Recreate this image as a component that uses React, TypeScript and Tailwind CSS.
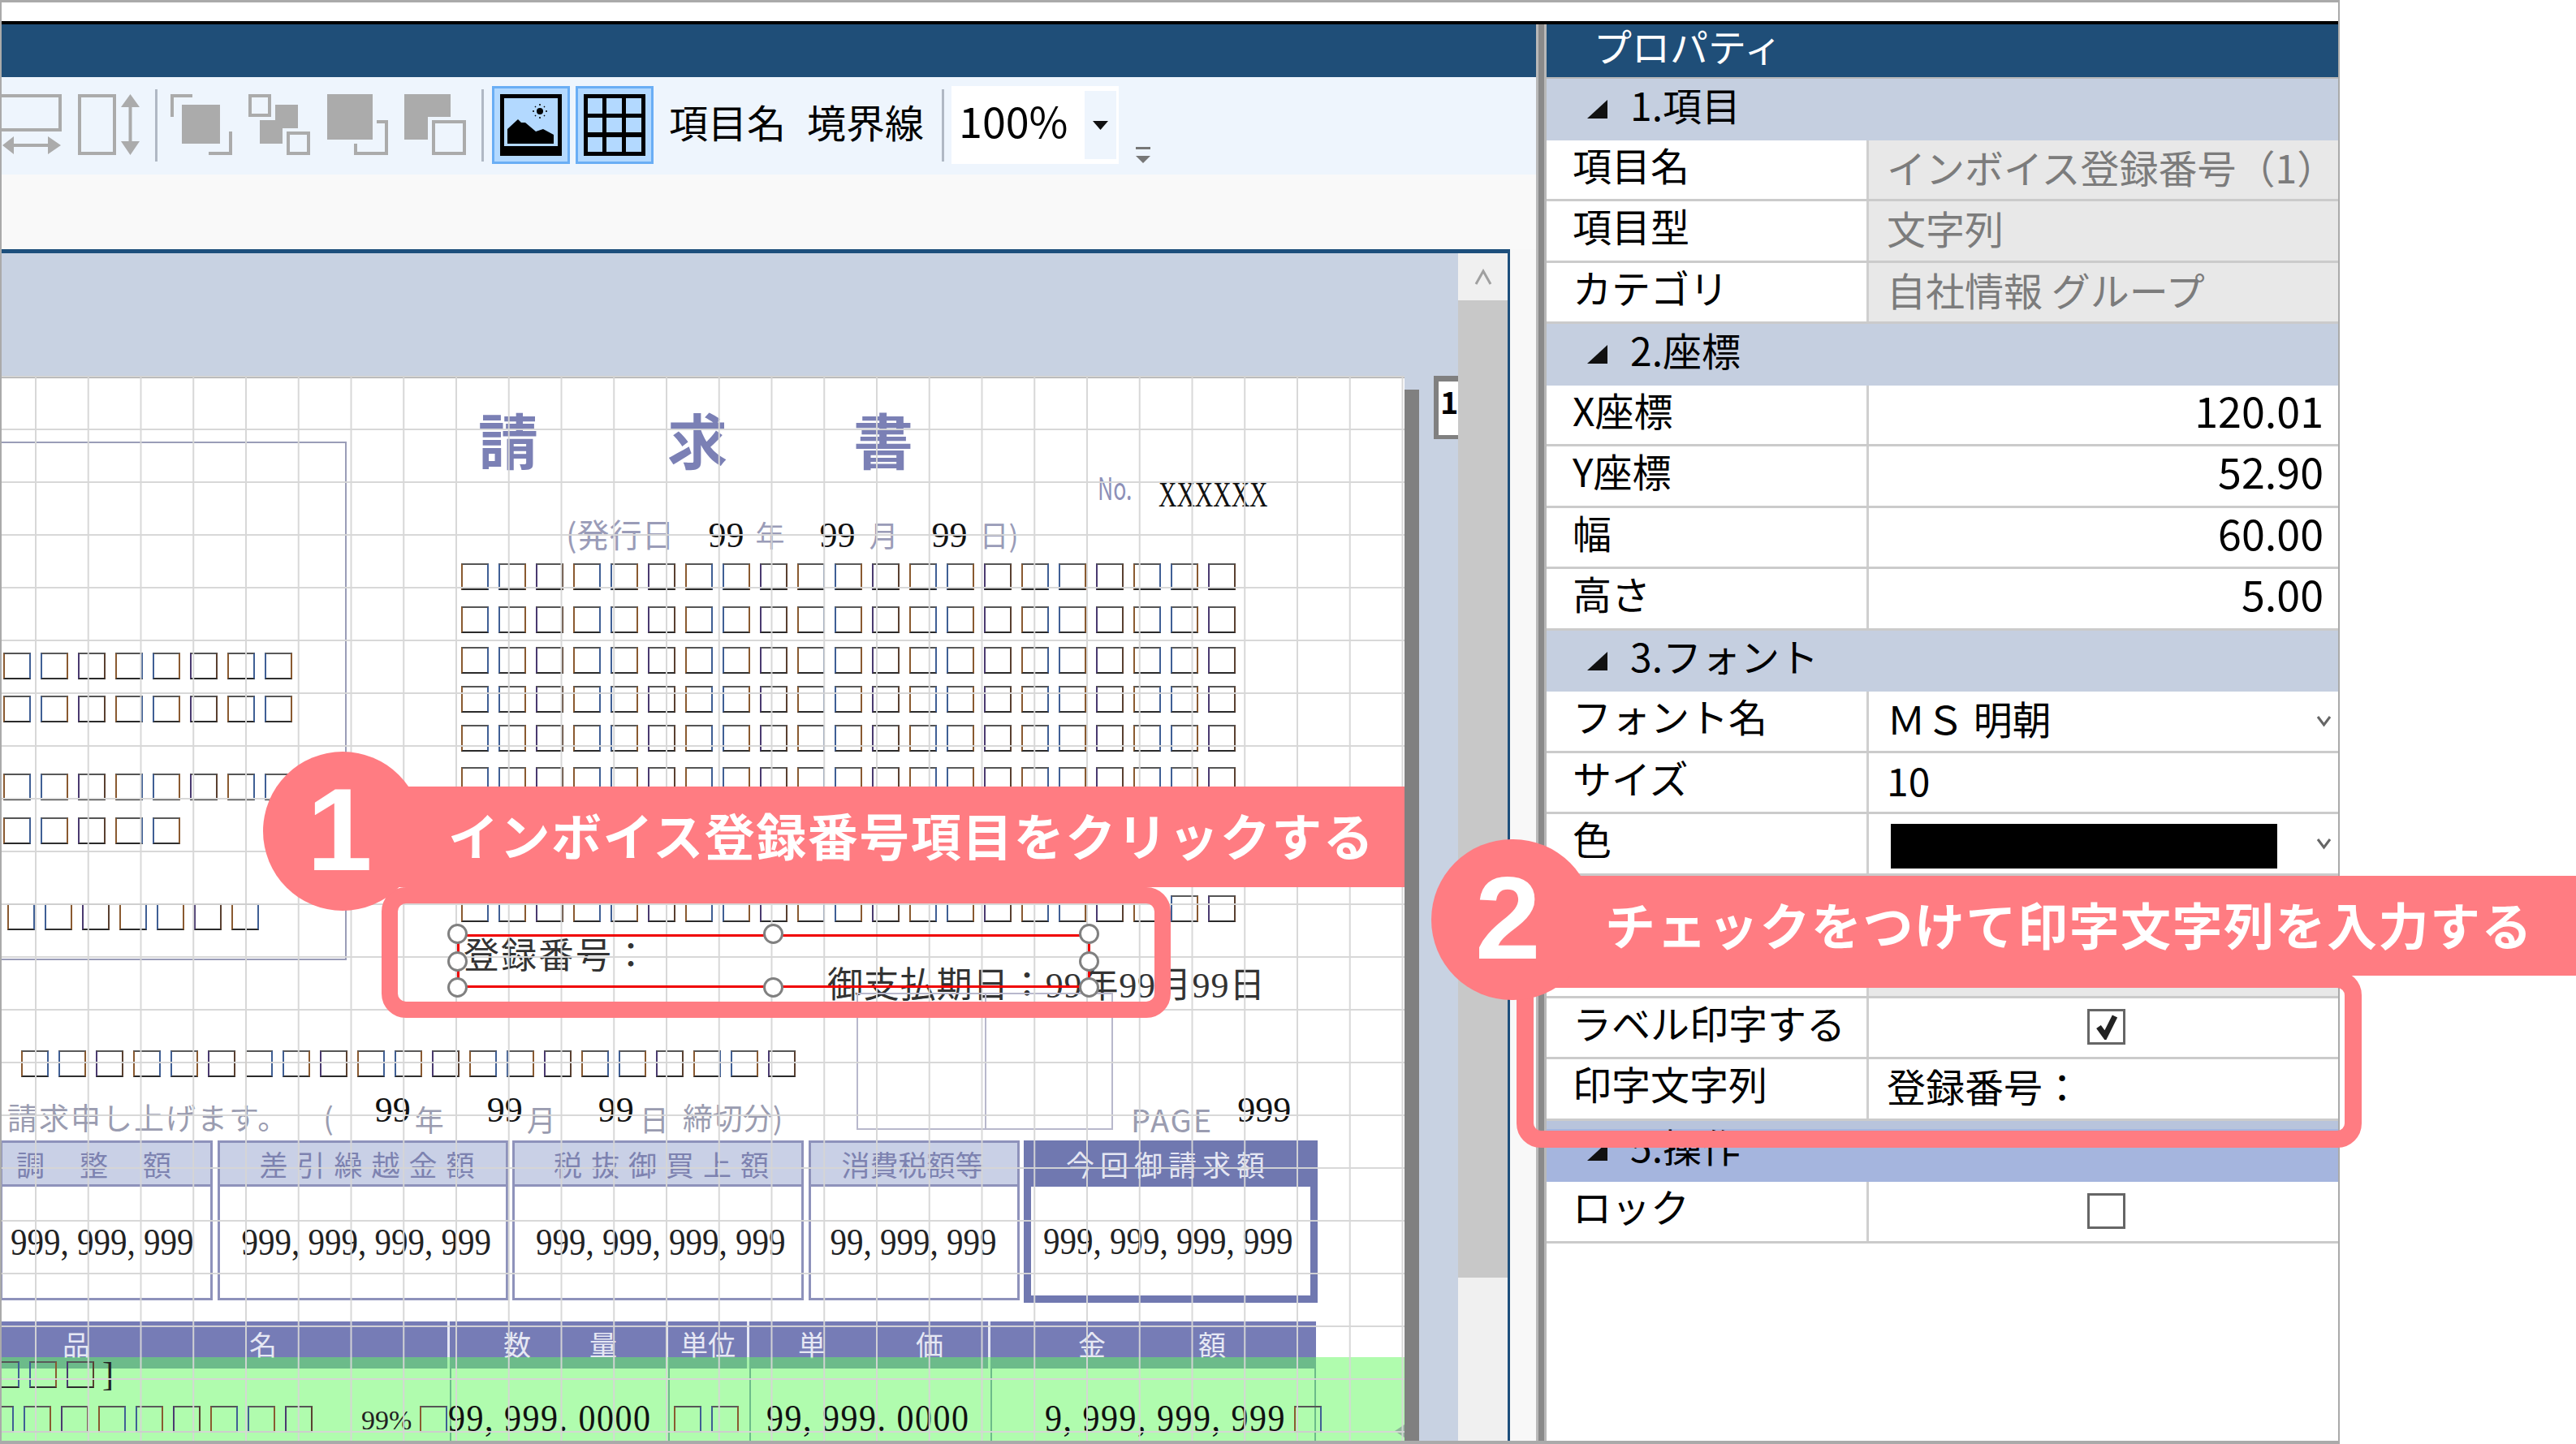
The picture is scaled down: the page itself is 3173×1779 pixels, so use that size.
const gothic = "font-['Noto_Sans_CJK_JP','Liberation_Sans',sans-serif]";
const mincho = "font-['Liberation_Serif','Noto_Sans_CJK_JP',serif]";

const fringes = [
  'border-t-[#555] border-b-[#2a2a2a] border-l-[#8a5a30] border-r-[#3f5f95]',
  'border-t-[#5a5a5a] border-b-[#303030] border-l-[#3f5f95] border-r-[#8a5a30]',
  'border-t-[#555] border-b-[#2a2a2a] border-l-[#4a3a70] border-r-[#5a4030]',
];

function Squares({ count, className = '' }: { count: number; className?: string }) {
  return (
    <div className={`flex gap-[12px] ${className}`}>
      {Array.from({ length: count }, (_, i) => (
        <div key={i} className={`h-[33px] w-[34px] shrink-0 border-2 ${fringes[i % 3]}`} />
      ))}
    </div>
  );
}

function SummaryBox({ title, value, className, titleClass, valueClass, strong }: {
  title: string;
  value: string;
  className: string;
  titleClass: string;
  valueClass: string;
  strong?: boolean;
}) {
  return (
    <div className={`flex shrink-0 flex-col bg-white ${strong ? 'border-[9px] border-t-0 border-[#7078b0]' : 'border-[3px] border-[#8e92bb]'} ${className}`}>
      <div className={`flex h-[54px] shrink-0 items-center whitespace-nowrap text-[35px] leading-none ${strong ? 'bg-[#7078b0] text-[#e4e6f3]' : 'border-b-[3px] border-[#8e92bb] bg-[#c9d0e6] text-[#7d82b0]'} ${titleClass}`}>
        {title}
      </div>
      <div className={`flex flex-1 items-center whitespace-nowrap text-[41px] leading-none text-[#222] ${mincho} ${valueClass}`}>
        <span className="inline-block scale-y-[1.12]">{value}</span>
      </div>
    </div>
  );
}

function InvoiceForm() {
  const digit = `text-[44px] leading-none text-[#111] ${mincho}`;
  return (
    <div className={`relative h-[1312px] w-[1728px] shrink-0 overflow-hidden bg-white ${gothic}`}>
      <div className="absolute left-0 right-0 top-0 h-[3px] bg-[#a8a8a8]" />

      {/* left address frame */}
      <div className="absolute left-[-2px] top-[81px] h-[639px] w-[427px] border-2 border-[#9a9db8]" />

      <div className="absolute left-[587px] top-[40px] flex text-[74px] font-bold leading-none text-[#7b80b5]">
        <span>請</span>
        <span className="ml-[159px]">求</span>
        <span className="ml-[155px]">書</span>
      </div>

      <span className="absolute left-[1350px] top-[118px] origin-left scale-x-[0.7] text-[38px] leading-none text-[#8d90b8]">No.</span>
      <span className={`absolute left-[1425px] top-[124px] origin-left scale-x-[0.69] text-[45px] leading-none text-[#111] ${mincho}`}>XXXXXX</span>

      <div className="absolute left-[695px] top-[174px] flex items-baseline whitespace-nowrap text-[36px] leading-none text-[#9a9cb8]">
        <span className="text-[40px]">(発行日</span>
        <span className={`ml-[42px] ${digit}`}>99</span>
        <span className="ml-[14px]">年</span>
        <span className={`ml-[43px] ${digit}`}>99</span>
        <span className="ml-[17px]">月</span>
        <span className={`ml-[41px] ${digit}`}>99</span>
        <span className="ml-[15px]">日)</span>
      </div>

      {/* customer and address character cells */}
      <div className="absolute left-[566px] top-[231px] flex flex-col">
        <Squares count={21} />
        <Squares count={21} className="mt-[20px]" />
        <Squares count={21} className="mt-[17px]" />
        <Squares count={21} className="mt-[15px]" />
        <Squares count={21} className="mt-[15px]" />
        <Squares count={21} className="mt-[19px]" />
        <Squares count={21} className="mt-[125px]" />
      </div>
      <div className="absolute left-[2px] top-[341px] flex flex-col">
        <Squares count={8} />
        <Squares count={8} className="mt-[20px]" />
        <Squares count={8} className="mt-[63px]" />
        <Squares count={5} className="mt-[21px]" />
        <Squares count={7} className="ml-[5px] mt-[73px]" />
      </div>
      <Squares count={21} className="absolute left-[24px] top-[831px]" />

      <span className="absolute left-[569px] top-[689px] whitespace-nowrap text-[44px] leading-none tracking-[2px] text-[#333]">登録番号：</span>
      <span className={`absolute left-[1017px] top-[730px] whitespace-nowrap text-[44px] leading-none tracking-[0.8px] text-[#333] ${mincho}`}>御支払期日：99年99月99日</span>

      {/* stamp frame */}
      <div className="absolute left-[1053px] top-[760px] h-[169px] w-[316px] border-2 border-[#b8b8cc]">
        <div className="ml-[156px] h-full w-[2px] bg-[#b8b8cc]" />
      </div>

      <div className="absolute left-[7px] top-[883px] flex items-start whitespace-nowrap text-[37px] leading-none text-[#9a9cb0]">
        <span className="mt-[12px] tracking-[2px]">請求申し上げます。</span>
        <span className="ml-[42px] mt-[12px]">(</span>
        <span className={`ml-[51px] ${digit}`}>99</span>
        <span className="ml-[5px] mt-[14px] text-[36px]">年</span>
        <span className={`ml-[53px] ${digit}`}>99</span>
        <span className="ml-[5px] mt-[14px] text-[36px]">月</span>
        <span className={`ml-[52px] ${digit}`}>99</span>
        <span className="ml-[7px] mt-[14px] text-[36px]">日</span>
        <span className="ml-[17px] mt-[12px]">締切分)</span>
      </div>
      <div className="absolute left-[1391px] top-[883px] flex items-start whitespace-nowrap leading-none">
        <span className="mt-[14px] text-[38px] tracking-[2px] text-[#9a9cb0]">PAGE</span>
        <span className={`ml-[30px] ${digit}`}>999</span>
      </div>

      {/* totals */}
      <div className="absolute left-[-2px] top-[942px] flex items-start gap-[5.5px]">
        <SummaryBox title="調整額" value="999, 999, 999" className="h-[197px] w-[262px]" titleClass="pl-[17px] tracking-[43px]" valueClass="pl-[10px]" />
        <SummaryBox title="差引繰越金額" value="999, 999, 999, 999" className="h-[197px] w-[358px]" titleClass="pl-[49px] tracking-[11px]" valueClass="pl-[27px]" />
        <SummaryBox title="税抜御買上額" value="999, 999, 999, 999" className="h-[197px] w-[359px]" titleClass="pl-[48px] tracking-[11px]" valueClass="pl-[26px]" />
        <SummaryBox title="消費税額等" value="99, 999, 999" className="h-[197px] w-[260px]" titleClass="pl-[38px]" valueClass="pl-[24px]" />
        <SummaryBox strong title="今回御請求額" value="999, 999, 999, 999" className="h-[200px] w-[362px]" titleClass="h-[57px] pl-[43px] tracking-[7px]" valueClass="pl-[15px]" />
      </div>

      {/* detail table */}
      <div className="absolute left-0 top-[1165px] flex h-[147px] w-[1619px] border-r-2 border-[#767cb6] text-[34px] leading-none text-[#e6e8f4]">
        <div className="w-[554px] shrink-0 border-r-2 border-[#767cb6]">
          <div className="flex h-[58px] gap-[196px] border-r-[3px] border-[#e6e8f4] bg-[#767cb6] pl-[75px] pt-[11px]"><span>品</span><span>名</span></div>
        </div>
        <div className="w-[269px] shrink-0 border-r-2 border-[#767cb6]">
          <div className="flex h-[58px] gap-[72px] border-r-[3px] border-[#e6e8f4] bg-[#767cb6] pl-[64px] pt-[11px]"><span>数</span><span>量</span></div>
        </div>
        <div className="w-[100px] shrink-0 border-r-2 border-[#767cb6]">
          <div className="flex h-[58px] whitespace-nowrap border-r-[3px] border-[#e6e8f4] bg-[#767cb6] pl-[13px] pt-[11px]">単位</div>
        </div>
        <div className="w-[297px] shrink-0 border-r-2 border-[#767cb6]">
          <div className="flex h-[58px] gap-[111px] border-r-[3px] border-[#e6e8f4] bg-[#767cb6] pl-[58px] pt-[11px]"><span>単</span><span>価</span></div>
        </div>
        <div className="min-w-0 flex-1">
          <div className="flex h-[58px] gap-[114px] bg-[#767cb6] pl-[106px] pt-[11px]"><span>金</span><span>額</span></div>
        </div>
      </div>

      {/* selected detail band */}
      <div className="absolute bottom-0 left-0 right-0 h-[103px] bg-[#61f95e80]" />

      <Squares count={3} className="absolute left-[-12px] top-[1214px]" />
      <span className={`absolute left-[124px] top-[1209px] text-[42px] leading-none text-[#222] ${mincho}`}>]</span>
      <Squares count={9} className="absolute left-[-19px] top-[1269px]" />
      <span className={`absolute left-[443px] top-[1270px] text-[34px] leading-none text-[#222] ${mincho}`}>99%</span>
      <Squares count={1} className="absolute left-[515px] top-[1269px]" />
      <span className={`absolute left-[550px] top-[1264px] scale-y-[1.1] whitespace-nowrap text-[42px] leading-none tracking-[1.5px] text-[#111] ${mincho}`}>99, 999. 0000</span>
      <Squares count={2} className="absolute left-[828px] top-[1269px]" />
      <span className={`absolute left-[942px] top-[1264px] scale-y-[1.1] whitespace-nowrap text-[42px] leading-none tracking-[1.5px] text-[#111] ${mincho}`}>99, 999. 0000</span>
      <span className={`absolute left-[1285px] top-[1264px] scale-y-[1.1] whitespace-nowrap text-[42px] leading-none tracking-[1.5px] text-[#111] ${mincho}`}>9, 999, 999, 999</span>
      <Squares count={1} className="absolute left-[1592px] top-[1269px]" />
      <svg className="absolute left-[1716px] top-[1292px]" width="12" height="16" viewBox="0 0 12 16"><path d="M12 0V16L0 8Z" fill="#8fb59a" /></svg>

      {/* design grid */}
      <div className="pointer-events-none absolute inset-0 bg-[linear-gradient(to_right,#d6d6d6_2px,transparent_2px),linear-gradient(to_bottom,#d6d6d6_2px,transparent_2px)] bg-size-[64.75px_65px] bg-position-[41px_65px] opacity-95" />

      {/* selection rectangle with its handles */}
      <div className="absolute left-[561px] top-[688px] h-[66px] w-[780px] border-[3.5px] border-[#f00000]" />
      <div className="absolute left-[549px] top-[675px] size-[25px] rounded-full border-[3px] border-[#808080] bg-white" />
      <div className="absolute left-[938px] top-[675px] size-[25px] rounded-full border-[3px] border-[#808080] bg-white" />
      <div className="absolute left-[1327px] top-[675px] size-[25px] rounded-full border-[3px] border-[#808080] bg-white" />
      <div className="absolute left-[549px] top-[709px] size-[25px] rounded-full border-[3px] border-[#808080] bg-white" />
      <div className="absolute left-[1327px] top-[709px] size-[25px] rounded-full border-[3px] border-[#808080] bg-white" />
      <div className="absolute left-[549px] top-[741px] size-[25px] rounded-full border-[3px] border-[#808080] bg-white" />
      <div className="absolute left-[938px] top-[741px] size-[25px] rounded-full border-[3px] border-[#808080] bg-white" />
      <div className="absolute left-[1327px] top-[741px] size-[25px] rounded-full border-[3px] border-[#808080] bg-white" />
    </div>
  );
}

function Toolbar() {
  const gray = '#ababab';
  return (
    <div className="flex h-[120px] shrink-0 items-center bg-[#eef5fd] pb-[2px]">
      <svg className="shrink-0" width="74" height="76" viewBox="0 0 74 76" fill="none">
        <path d="M-3 2H72V44H-3" stroke={gray} strokeWidth="4" />
        <path d="M5 63H68" stroke={gray} strokeWidth="4" />
        <path d="M1 63L15 52V74ZM73 63L57 52V74Z" fill={gray} />
      </svg>
      <svg className="ml-[20px] shrink-0" width="76" height="76" viewBox="0 0 76 76" fill="none">
        <rect x="2" y="2" width="43" height="71" stroke={gray} strokeWidth="4" />
        <path d="M64.5 10V66" stroke={gray} strokeWidth="4" />
        <path d="M53 16H76L64.5 0ZM53 58H76L64.5 75Z" fill={gray} />
      </svg>
      <div className="ml-[19px] h-[89px] w-[3px] shrink-0 bg-[#b0b8c4]" />
      <svg className="ml-[16px] shrink-0" width="76" height="76" viewBox="0 0 76 76" fill="none">
        <path d="M2 28V2H27" stroke={gray} strokeWidth="4" />
        <rect x="14" y="13" width="47" height="48" fill={gray} />
        <path d="M74 46V73H47" stroke={gray} strokeWidth="4" />
      </svg>
      <svg className="ml-[20px] shrink-0" width="76" height="76" viewBox="0 0 76 76" fill="none">
        <rect x="2" y="2" width="24" height="24" stroke={gray} strokeWidth="4" />
        <rect x="33" y="13" width="28" height="29" fill={gray} />
        <rect x="14" y="32" width="28" height="29" fill={gray} />
        <rect x="49" y="48" width="25" height="25" stroke={gray} strokeWidth="4" />
      </svg>
      <svg className="ml-[21px] shrink-0" width="75" height="76" viewBox="0 0 75 76" fill="none">
        <rect width="56" height="56" fill={gray} />
        <path d="M61 34H73V73H35V61" stroke={gray} strokeWidth="4" />
      </svg>
      <svg className="ml-[20px] shrink-0" width="76" height="76" viewBox="0 0 76 76" fill="none">
        <path d="M0 0H57V28H29V56H0Z" fill={gray} />
        <rect x="36" y="34" width="38" height="39" stroke={gray} strokeWidth="4" />
      </svg>
      <div className="ml-[19px] h-[89px] w-[3px] shrink-0 bg-[#b0b8c4]" />
      <button className="ml-[10px] flex size-[96px] shrink-0 items-center justify-center border-[3px] border-[#6aaef5] bg-[#b3d9ff]">
        <svg width="76" height="76" viewBox="0 0 76 76">
          <rect width="76" height="76" fill="#000" />
          <rect x="5" y="5" width="66" height="59" fill="#b3d9ff" />
          <path d="M9 43L22 31L26 35L31 35L44 46L53 43L66 50V61H9Z" fill="#000" />
          <circle cx="49" cy="21" r="4" fill="#000" />
          <path d="M49 12V14M49 28V30M40 21H42M56 21H58M43 15L44 16M54 26L55 27M43 27L44 26M54 16L55 15" stroke="#000" strokeWidth="1.5" />
        </svg>
      </button>
      <button className="ml-[7px] flex size-[96px] shrink-0 items-center justify-center border-[3px] border-[#6aaef5] bg-[#b3d9ff]">
        <svg width="76" height="76" viewBox="0 0 76 76">
          <rect width="76" height="76" fill="#000" />
          <path d="M5 5H23V24H5ZM28 5H47V24H28ZM52 5H71V24H52ZM5 29H23V47H5ZM28 29H47V47H28ZM52 29H71V47H52ZM5 53H23V71H5ZM28 53H47V71H28ZM52 53H71V71H52Z" fill="#b3d9ff" />
        </svg>
      </button>
      <span className="mb-[10px] ml-[19px] shrink-0 whitespace-nowrap text-[48px] leading-none text-black">項目名</span>
      <span className="mb-[10px] ml-[26px] shrink-0 whitespace-nowrap text-[48px] leading-none text-black">境界線</span>
      <div className="ml-[22px] h-[89px] w-[3px] shrink-0 bg-[#b0b8c4]" />
      <div className="ml-[9px] flex h-[96px] w-[206px] shrink-0 items-center justify-between bg-white pl-[9px] pr-[3px]">
        <span className="mb-[13px] text-[52px] leading-none text-black">100%</span>
        <div className="flex h-[84px] w-[39px] items-center justify-center bg-[#eef5fd]">
          <svg width="19" height="11" viewBox="0 0 19 11"><path d="M0 0H19L9.5 11Z" fill="#111" /></svg>
        </div>
      </div>
      <div className="mb-[12px] ml-[21px] flex shrink-0 flex-col gap-[8px] self-end">
        <div className="h-[3px] w-[18px] bg-[#777]" />
        <svg width="18" height="9" viewBox="0 0 18 9"><path d="M0 0H18L9 9Z" fill="#777" /></svg>
      </div>
    </div>
  );
}

function Section({ title, active }: { title?: string; active?: boolean }) {
  return (
    <div className={`flex h-[75.5px] shrink-0 items-center pl-[50px] ${active ? 'border-t-[10px] border-[#b8c4dc] bg-[#a5b5de] pb-[24px]' : 'bg-[#c5cfe0] pb-[14px]'}`}>
      <svg width="25" height="23" viewBox="0 0 25 23" className="mt-[14px]"><path d="M25 0V23H0Z" fill="#111" /></svg>
      <span className="ml-[28px] text-[48px] leading-none text-black">{title}</span>
    </div>
  );
}

function Chevron() {
  return (
    <svg className="absolute right-[8px] top-[29px]" width="19" height="15" viewBox="0 0 19 15" fill="none">
      <path d="M2 2L9.5 12L17 2" stroke="#666" strokeWidth="3" />
    </svg>
  );
}

function Row({ label, children, disabled, right }: {
  label?: string;
  children?: React.ReactNode;
  disabled?: boolean;
  right?: boolean;
}) {
  return (
    <div className="flex h-[75.5px] shrink-0 border-b-[3px] border-[#cbcbcb] bg-white">
      <div className="w-[394px] shrink-0 whitespace-nowrap pl-[32px] pt-[5px] text-[48px] leading-none text-black">{label}</div>
      <div className={`relative flex flex-1 items-center border-l-[3px] border-[#cfcfcf] pb-[8px] text-[48px] leading-none ${disabled ? 'bg-[#e8e8e8] text-[#7c7c7c]' : 'text-black'} ${right ? 'justify-end pr-[18px]' : 'pl-[22px]'}`}>
        {children}
      </div>
    </div>
  );
}

function Checkbox({ checked, className }: { checked?: boolean; className: string }) {
  return (
    <div className={`ml-[247px] flex h-[44px] w-[47px] items-center justify-center border-[3px] border-[#666] bg-white ${className}`}>
      {checked && (
        <svg width="30" height="32" viewBox="0 0 30 32" fill="none">
          <path d="M5 16L13 27L25 3" stroke="#222" strokeWidth="7" />
        </svg>
      )}
    </div>
  );
}

function PropertyPanel() {
  return (
    <div className="flex min-w-0 flex-1 flex-col bg-white">
      <div className="flex h-[65px] shrink-0 items-center bg-[#1f4e78] pb-[14px] pl-[58px] text-[47px] leading-none text-white">プロパティ</div>
      <div className="h-[2px] shrink-0 bg-[#b8b8b8]" />
      <Section title="1.項目" />
      <Row label="項目名" disabled>インボイス登録番号（1）</Row>
      <Row label="項目型" disabled>文字列</Row>
      <Row label="カテゴリ" disabled>自社情報 グループ</Row>
      <Section title="2.座標" />
      <Row label="X座標" right><span className="mb-[4px] text-[52px]">120.01</span></Row>
      <Row label="Y座標" right><span className="mb-[4px] text-[52px]">52.90</span></Row>
      <Row label="幅" right><span className="mb-[4px] text-[52px]">60.00</span></Row>
      <Row label="高さ" right><span className="mb-[4px] text-[52px]">5.00</span></Row>
      <Section title="3.フォント" />
      <Row label="フォント名">ＭＳ 明朝<Chevron /></Row>
      <Row label="サイズ">10</Row>
      <Row label="色">
        <div className="ml-[5px] mt-[15px] h-[55px] w-[476px] bg-black" />
        <Chevron />
      </Row>
      <Section />
      <Row disabled />
      <Row label="ラベル印字する"><Checkbox checked className="mt-[7px]" /></Row>
      <Row label="印字文字列">登録番号：</Row>
      <Section title="5.操作" active />
      <Row label="ロック"><Checkbox className="mt-[8px]" /></Row>
    </div>
  );
}

function Callout({ num, text, circleClass, numClass, bannerClass }: {
  num: string;
  text: string;
  circleClass: string;
  numClass: string;
  bannerClass: string;
}) {
  return (
    <>
      <div className={`absolute rounded-full bg-[#ff7c82] ${circleClass}`} />
      <div className={`absolute flex items-center bg-[#ff7c82] pb-[6px] text-[62px] font-bold leading-none tracking-[1.5px] text-white ${bannerClass}`}>
        {text}
      </div>
      <span className={`absolute font-['Liberation_Sans',sans-serif] text-[145px] font-bold leading-none text-white ${numClass}`}>{num}</span>
    </>
  );
}

export default function App() {
  return (
    <div className={`relative flex h-[1779px] w-[3173px] overflow-hidden bg-white ${gothic}`}>
      <div className="flex h-full w-[2882px] shrink-0 flex-col border-x-2 border-b-4 border-t-[3px] border-[#aaaaaa]">
        <div className="h-[23px] shrink-0 bg-white" />
        <div className="h-[4px] shrink-0 bg-black" />
        <div className="flex min-h-0 flex-1">
          <div className="flex w-[1890px] shrink-0 flex-col">
            <div className="h-[65px] shrink-0 bg-[#1f4e78]" />
            <Toolbar />
            <div className="h-[92px] shrink-0 bg-[#f9f9f9]" />
            <div className="flex min-h-0 flex-1 bg-[#f8f8f8]">
              <div className="flex h-full w-[1858px] shrink-0 border-r-[3px] border-t-[5px] border-[#1d4f7c]">
                <div className="flex w-[1794px] shrink-0 items-start bg-[#c8d2e2] pt-[151px]">
                  <InvoiceForm />
                  <div className="mt-[17px] h-[1295px] w-[18px] shrink-0 bg-[#808080]" />
                  <div className="ml-[18px] h-[78px] w-[30px] shrink-0 overflow-hidden border-b-[5px] border-l-[6px] border-t-[7px] border-[#808080] bg-white pl-[2px] text-[38px] font-bold leading-[48px] text-black">1</div>
                </div>
                <div className="flex min-w-0 flex-1 flex-col bg-[#f0f0f0]">
                  <div className="flex h-[58px] shrink-0 items-center justify-center">
                    <svg width="24" height="20" viewBox="0 0 24 20" fill="none"><path d="M3 19L12 3L21 19" stroke="#a0a0a0" strokeWidth="3" /></svg>
                  </div>
                  <div className="h-[1204px] shrink-0 bg-[#c8c8c8]" />
                </div>
              </div>
            </div>
          </div>
          <div className="w-[13px] shrink-0 border-x-[3px] border-[#b8b8b8] bg-[#8a8a8a]" />
          <PropertyPanel />
        </div>
      </div>

      {/* annotation frames and callouts */}
      <div className="absolute left-[470px] top-[1093px] h-[161px] w-[972px] rounded-[30px] border-[20px] border-[#ff7c82]" />
      <div className="absolute left-[1868px] top-[1196px] h-[218px] w-[1041px] rounded-[30px] border-[21px] border-[#ff7c82]" />
      <Callout
        num="1"
        text="インボイス登録番号項目をクリックする"
        circleClass="left-[324px] top-[926px] h-[196px] w-[196px]"
        bannerClass="left-[422px] top-[969px] h-[124px] w-[1308px] pl-[130px]"
        numClass="left-[378px] top-[950px]"
      />
      <Callout
        num="2"
        text="チェックをつけて印字文字列を入力する"
        circleClass="left-[1763px] top-[1034px] h-[198px] w-[200px]"
        bannerClass="left-[1864px] top-[1079px] h-[123px] w-[1309px] pl-[113px]"
        numClass="left-[1817px] top-[1059px]"
      />
    </div>
  );
}
